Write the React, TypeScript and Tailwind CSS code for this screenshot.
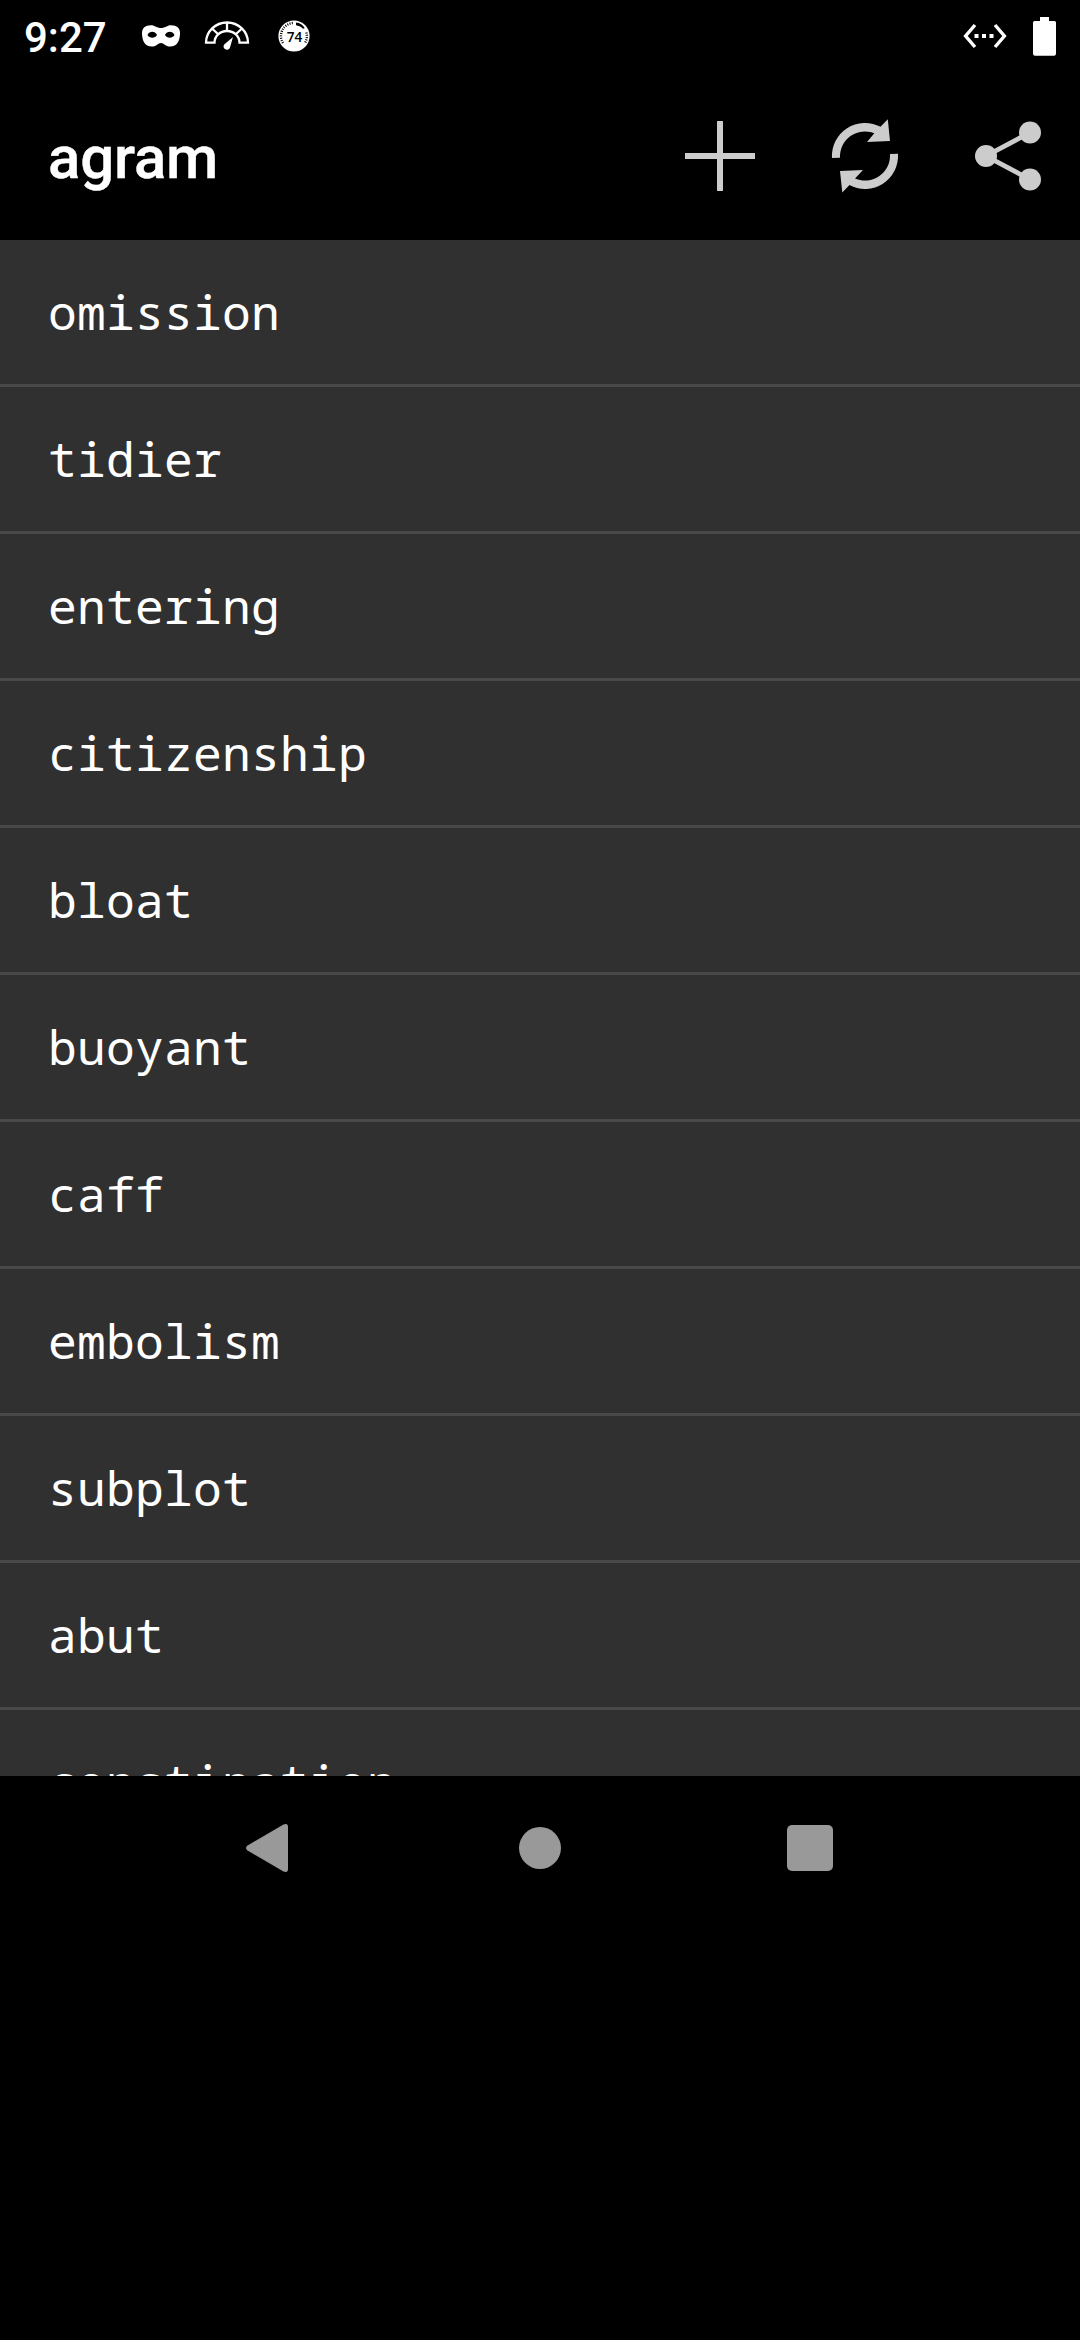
const words = [
  'omission',
  'tidier',
  'entering',
  'citizenship',
  'bloat',
  'buoyant',
  'caff',
  'embolism',
  'subplot',
  'abut',
  'constipation',
];

function MaskIcon() {
  return (
    <svg className="h-[24px] w-[40px]" viewBox="0 0 40 24" fill="#fff">
      <path
        fillRule="evenodd"
        d="M10 1.2C14 1.2 16 4 20 4C24 4 26 1.2 30 1.2C36 1.2 39 4 39 9C39 16 36.500 22.600 29 22.600C24.500 22.600 23 19 20 19C17 19 15.500 22.600 11 22.600C3.500 22.600 1 16 1 9C1 4 4 1.200 10 1.200ZM6.500 11C8.500 6.800 14 6.800 16 11C14 14.500 8.500 14.500 6.500 11ZM24 11C26 6.800 31.500 6.800 33.500 11C31.500 14.500 26 14.500 24 11Z"
      />
    </svg>
  );
}

function GaugeIcon() {
  return (
    <svg className="ml-[23px] h-[30px] w-[46px]" viewBox="0 0 46 30" fill="none" stroke="#fff" strokeWidth="2.300">
      <path d="M2 21.700A21 20.200 0 0 1 44 21.700H35.500A12.500 11.700 0 0 0 10.500 21.700Z" />
      <path d="M23 1.500V10M8 7.500L14.500 13.500M38 7.500L31.500 13.500" />
      <path d="M29 16L26 26.500A3.300 3.300 0 1 1 20.200 23.500Z" fill="#fff" stroke="none" />
    </svg>
  );
}

function DialIcon() {
  return (
    <svg className="ml-[28px] h-[32px] w-[32px]" viewBox="0 0 32 32">
      <circle cx="16" cy="16" r="15.600" fill="#fff" />
      <path
        d="M5 23A13 13 0 0 1 16 3M28.300 12.500A13 13 0 0 1 27 23"
        fill="none"
        stroke="#000"
        strokeWidth="2.400"
        strokeDasharray="1 1.300"
      />
      <path d="M18 2.600C22 3 25 5 26.800 8.200L25 8.800C22.800 6.500 20.500 5.800 18 5.300Z" fill="#000" />
      <text
        x="16.500"
        y="21.500"
        textAnchor="middle"
        fontFamily="Open Sans, sans-serif"
        fontWeight="600"
        fontSize="15"
        textLength="15.500"
        lengthAdjust="spacingAndGlyphs"
        fill="#000"
      >
        74
      </text>
    </svg>
  );
}

function EthernetIcon() {
  return (
    <svg className="h-[26px] w-[44px]" viewBox="0 0 44 26" fill="none" stroke="#fff" strokeWidth="3.400">
      <path d="M12 2L2.600 13L12 24M32 2L41.400 13L32 24" />
      <path d="M11.500 13H15.500M19 13H23M26.500 13H30.500" strokeWidth="4" />
    </svg>
  );
}

function BatteryIcon() {
  return (
    <svg className="ml-[26px] h-[39px] w-[23px]" viewBox="0 0 23 39" fill="#fff">
      <path d="M7 0H16V4H21.500Q23 4 23 5.500V36.500Q23 38.700 21 38.700H2Q0 38.700 0 36.500V5.500Q0 4 1.500 4H7Z" />
    </svg>
  );
}

function StatusBar() {
  return (
    <header className="flex h-[72px] items-center pr-6 pl-6">
      <span className="w-[117px] pt-1 font-['Roboto',sans-serif] text-[42px] leading-[72px] font-medium">9:27</span>
      <div className="flex h-[72px] items-center">
        <MaskIcon />
        <GaugeIcon />
        <DialIcon />
      </div>
      <div className="ml-auto flex items-center">
        <EthernetIcon />
        <BatteryIcon />
      </div>
    </header>
  );
}

function AppBar() {
  return (
    <div className="flex h-[168px] items-center justify-between pl-12">
      <h1 className="pt-1 font-['Roboto',sans-serif] text-[60px] leading-[168px] font-medium tracking-[-0.2px] [-webkit-text-stroke:0.4px_white]">
        agram
      </h1>
      <div className="flex h-[168px]">
        <button aria-label="Add" className="h-[168px] w-[144px]">
          <svg className="h-[168px] w-[144px]" viewBox="648 72 144 168" fill="#ccc">
            <path d="M717 121h6v32h32v6h-32v32h-6v-32h-32v-6h32z" />
          </svg>
        </button>
        <button aria-label="Refresh" className="h-[168px] w-[144px]">
          <svg className="h-[168px] w-[144px]" viewBox="792 72 144 168" fill="#ccc">
            <path d="M832 158A33 33 0 0 1 880.500 126.800L887.800 119.300L890 141L867 142L874.300 133.300A25 25 0 0 0 840 157.700Z" />
            <path d="M898 153.800A33 33 0 0 1 849.500 185L842.300 192.500L840 171L863 170L855 178.500A25 25 0 0 0 890 154.100Z" />
          </svg>
        </button>
        <button aria-label="Share" className="h-[168px] w-[144px]">
          <svg className="h-[168px] w-[144px]" viewBox="936 72 144 168" fill="#ccc">
            <path d="M1030 132.500L986 156L1030 179.500" fill="none" stroke="#ccc" strokeWidth="4.800" />
            <circle cx="986" cy="156" r="11" />
            <circle cx="1030" cy="132.500" r="11" />
            <circle cx="1030" cy="179.500" r="11" />
          </svg>
        </button>
      </div>
    </div>
  );
}

function NavBar() {
  return (
    <nav className="grid h-[144px] grid-cols-[405px_270px_405px] items-center">
      <button aria-label="Back" className="flex pl-[244px]">
        <svg className="h-[52px] w-[48px]" viewBox="0 0 48 52" fill="#999">
          <path d="M3.500 23.500L39.500 2.500Q44 0.800 44 5V47Q44 51.200 39.500 49.500L3.500 28.500Q0.500 26 3.500 23.500Z" />
        </svg>
      </button>
      <button aria-label="Home" className="flex justify-center">
        <span className="size-[42px] rounded-full bg-[#999]" />
      </button>
      <button aria-label="Recents" className="flex pl-[112px]">
        <span className="size-[46px] rounded-[5px] bg-[#999]" />
      </button>
    </nav>
  );
}

export default function App() {
  return (
    <div className="flex h-[2340px] w-[1080px] flex-col overflow-hidden bg-black text-white">
      <StatusBar />
      <AppBar />
      <ul className="h-[1536px] overflow-hidden bg-[#303030]">
        {words.map((word) => (
          <li
            key={word}
            className="h-[147px] border-b-3 border-[#494949] pl-12 font-['Noto_Sans_Mono','DejaVu_Sans_Mono',monospace] text-[48px] leading-[144px] tracking-[0.2px]"
          >
            {word}
          </li>
        ))}
      </ul>
      <NavBar />
    </div>
  );
}
